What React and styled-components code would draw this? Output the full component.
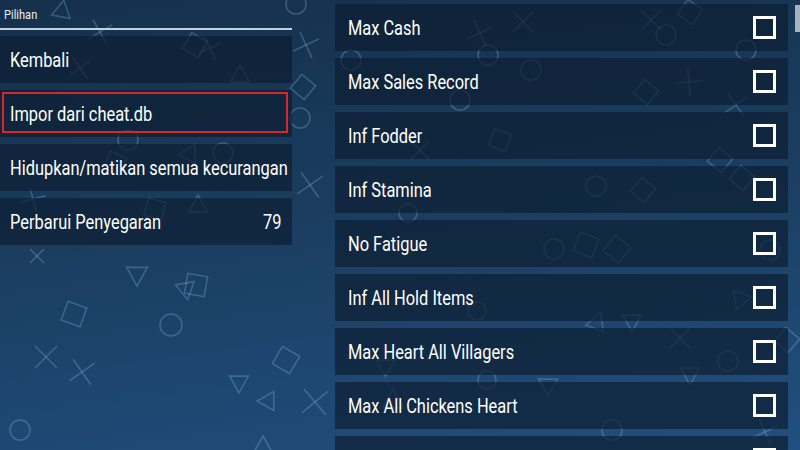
import React from 'react';
import styled, { createGlobalStyle } from 'styled-components';

const Global = createGlobalStyle`
  html, body { margin: 0; padding: 0; background: #173551; }
  #root { width: 800px; height: 450px; }
`;

const Screen = styled.div`
  position: relative;
  width: 800px;
  height: 450px;
  overflow: hidden;
  background: linear-gradient(172deg, #15304b 0%, #1a3d5f 45%, #214f7f 100%);
  font-family: Roboto, "Noto Sans", sans-serif;
  color: #ffffff;
`;

const Backdrop = styled.svg`
  position: absolute;
  left: 0;
  top: 0;
  width: 800px;
  height: 450px;
  pointer-events: none;
`;

const Layout = styled.div`
  position: relative;
  display: flex;
  height: 100%;
`;

const Sidebar = styled.div`
  width: 292px;
  display: flex;
  flex-direction: column;
  gap: 7px;
`;

const SectionHeader = styled.div`
  height: 28px;
  flex: none;
  border-bottom: 2px solid #c3d1de;
  display: flex;
  align-items: center;
  padding-left: 4px;
  margin-bottom: -1px;
`;

const HeaderText = styled.span`
  display: inline-block;
  font-size: 13px;
  transform: scaleX(0.85);
  transform-origin: left center;
  color: #e8eef4;
`;

const MenuItem = styled.div`
  position: relative;
  flex: none;
  height: 47px;
  box-sizing: border-box;
  display: flex;
  align-items: center;
  justify-content: space-between;
  padding: 0 11px 0 10px;
  background: rgba(13, 30, 50, 0.7);

  &::after {
    content: '';
    display: ${(p) => (p.$focused ? 'block' : 'none')};
    position: absolute;
    left: 2px;
    top: 2px;
    right: 4px;
    bottom: 4px;
    border: 2px solid #d8262b;
  }
`;

const Label = styled.span`
  display: inline-block;
  font-size: 20px;
  white-space: nowrap;
  transform: scaleX(0.82);
  transform-origin: left center;
`;

const Value = styled(Label)`
  transform-origin: right center;
`;

const CheatList = styled.div`
  margin-left: 43px;
  width: 453px;
  padding-top: 4px;
  display: flex;
  flex-direction: column;
  gap: 7px;
`;

const CheatRow = styled(MenuItem)`
  padding: 0 12px 0 13px;
`;

const Checkbox = styled.span`
  width: 23px;
  height: 23px;
  box-sizing: border-box;
  border: 3px solid #ffffff;
  flex: none;
  margin-left: auto;
`;

const Scrollbar = styled.div`
  position: absolute;
  right: 0;
  top: 5px;
  width: 5px;
  height: 27px;
  background: #a7b2bd;
`;

const symbols = [
  ['tri', 62, 10, 18, 10],
  ['x', 100, 32, 20, 15],
  ['x', 80, 68, 18, 10],
  ['sq', 195, 45, 18, 30],
  ['x', 210, 48, 18, 20],
  ['tri', 240, 75, 18, 0],
  ['circ', 296, 4, 20, 0],
  ['x', 306, 45, 20, 20],
  ['sq', 303, 87, 18, 40],
  ['circ', 300, 118, 20, 0],
  ['circ', 128, 140, 20, 0],
  ['sq', 115, 163, 18, 25],
  ['tri', 190, 153, 18, 30],
  ['circ', 223, 153, 20, 0],
  ['sq', 155, 209, 18, 15],
  ['tri', 198, 205, 18, 0],
  ['x', 33, 199, 18, 30],
  ['x', 310, 185, 22, 10],
  ['x', 37, 256, 14, 0],
  ['tri', 137, 275, 20, 180],
  ['sq', 196, 285, 20, 10],
  ['tri', 186, 290, 18, 170],
  ['sq', 74, 314, 20, 20],
  ['circ', 171, 325, 22, 0],
  ['x', 46, 357, 22, 0],
  ['x', 82, 372, 22, 10],
  ['sq', 286, 360, 20, 30],
  ['tri', 239, 383, 18, 180],
  ['tri', 267, 401, 18, 270],
  ['x', 315, 402, 24, 5],
  ['tri', 263, 447, 20, 0],
  ['circ', 20, 430, 20, 0],
  ['x', 480, 33, 20, 20],
  ['x', 523, 22, 20, 0],
  ['circ', 488, 55, 20, 0],
  ['circ', 531, 70, 20, 0],
  ['circ', 351, 60, 20, 0],
  ['x', 651, 20, 20, 0],
  ['circ', 666, 35, 20, 0],
  ['sq', 690, 12, 18, 35],
  ['circ', 746, 50, 20, 0],
  ['sq', 646, 92, 18, 40],
  ['x', 689, 82, 20, 40],
  ['x', 736, 105, 20, 10],
  ['circ', 460, 100, 20, 0],
  ['sq', 720, 160, 18, 40],
  ['sq', 742, 178, 18, 40],
  ['circ', 554, 249, 20, 0],
  ['sq', 586, 245, 20, 20],
  ['sq', 617, 249, 20, 40],
  ['sq', 643, 190, 18, 40],
  ['circ', 596, 186, 20, 0],
  ['circ', 408, 213, 18, 0],
  ['circ', 477, 311, 18, 0],
  ['tri', 597, 322, 18, 20],
  ['tri', 632, 322, 18, 180],
  ['x', 680, 338, 20, 0],
  ['circ', 728, 361, 20, 0],
  ['sq', 787, 340, 18, 40],
  ['tri', 387, 365, 18, 60],
  ['tri', 393, 400, 20, 0],
  ['circ', 487, 380, 18, 0],
  ['tri', 547, 384, 18, 300],
  ['tri', 690, 375, 18, 180],
  ['x', 765, 432, 20, 20],
  ['circ', 612, 430, 20, 0],
  ['x', 420, 150, 18, 0],
  ['sq', 500, 140, 18, 20],
  ['circ', 770, 250, 20, 0],
  ['tri', 740, 300, 18, 200],
];

function Symbol({ t, x, y, s, r }) {
  const h = s / 2;
  let shape;
  if (t === 'circ') shape = <circle cx="0" cy="0" r={h} />;
  else if (t === 'sq') shape = <rect x={-h} y={-h} width={s} height={s} />;
  else if (t === 'tri')
    shape = <polygon points={`0,${-s * 0.55} ${s * 0.52},${s * 0.38} ${-s * 0.52},${s * 0.38}`} />;
  else
    shape = (
      <>
        <line x1={-h} y1={-h} x2={h} y2={h} />
        <line x1={h} y1={-h} x2={-h} y2={h} />
      </>
    );
  return <g transform={`translate(${x} ${y}) rotate(${r})`}>{shape}</g>;
}

const menu = [
  { label: 'Kembali' },
  { label: 'Impor dari cheat.db', focused: true },
  { label: 'Hidupkan/matikan semua kecurangan' },
  { label: 'Perbarui Penyegaran', value: '79' },
];

const cheats = [
  'Max Cash',
  'Max Sales Record',
  'Inf Fodder',
  'Inf Stamina',
  'No Fatigue',
  'Inf All Hold Items',
  'Max Heart All Villagers',
  'Max All Chickens Heart',
  '',
];

export default function App() {
  return (
    <Screen>
      <Global />
      <Backdrop viewBox="0 0 800 450">
        <g fill="none" stroke="rgba(140,185,225,0.3)" strokeWidth="1.6">
          {symbols.map(([t, x, y, s, r], i) => (
            <Symbol key={i} t={t} x={x} y={y} s={s} r={r} />
          ))}
        </g>
      </Backdrop>
      <Layout>
        <Sidebar>
          <SectionHeader>
            <HeaderText>Pilihan</HeaderText>
          </SectionHeader>
          {menu.map((m) => (
            <MenuItem key={m.label} $focused={m.focused}>
              <Label>{m.label}</Label>
              {m.value && <Value>{m.value}</Value>}
            </MenuItem>
          ))}
        </Sidebar>
        <CheatList>
          {cheats.map((c, i) => (
            <CheatRow key={i}>
              {c && <Label>{c}</Label>}
              <Checkbox />
            </CheatRow>
          ))}
        </CheatList>
      </Layout>
      <Scrollbar />
    </Screen>
  );
}
